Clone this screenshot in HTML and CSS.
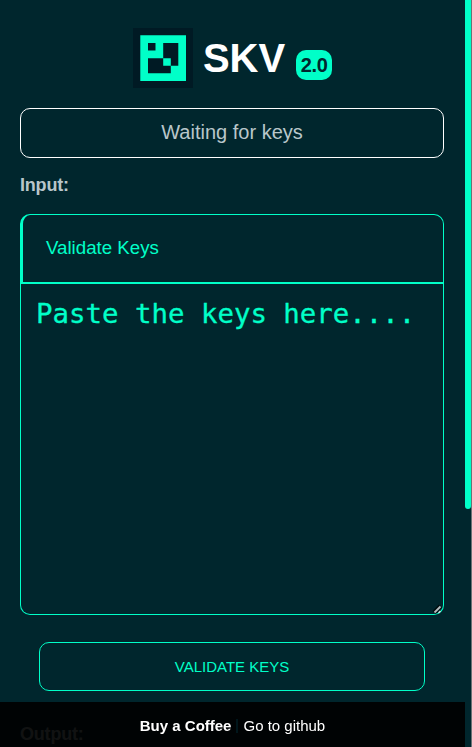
FILE: index.html
```html
<!DOCTYPE html>
<html lang="en">
<head>
<meta charset="utf-8">
<title>SKV 2.0</title>
<link rel="stylesheet" href="styles.css">
</head>
<body>
<main class="page">
  <header class="brand">
    <svg class="logo" viewBox="0 0 60 60" aria-hidden="true">
      <rect width="60" height="60" fill="#001a24"/>
      <path fill="#00ffc8" fill-rule="evenodd" d="M7.3 7.3H53V53H7.3ZM15 15V22.5H22.5V15ZM30.2 15V30.2H37.8V37.8H45.3V15ZM15 30.2V45.3H37.8V37.8H30.2V30.2Z"/>
    </svg>
    <h1 class="title">SKV</h1>
    <span class="version">2.0</span>
  </header>
  <div class="status">Waiting for keys</div>
  <h2 class="label">Input:</h2>
  <section class="editor">
    <div class="tab">Validate Keys</div>
    <textarea class="keys" placeholder="Paste the keys here...."></textarea>
    <svg class="grip" viewBox="0 0 12 12" aria-hidden="true">
      <path d="M2 9.5 8.5 3" stroke="#000d10" stroke-width="4.5"/>
      <path d="M2.5 9.5 8.5 3.5" stroke="#b5bec0" stroke-width="1.8"/>
      <path d="M6.5 10 8.5 8" stroke="#d9e6e4" stroke-width="1.5"/>
    </svg>
  </section>
  <button class="submit">VALIDATE KEYS</button>
  <h2 class="label output">Output:</h2>
</main>
<footer class="footer"><a class="coffee">Buy a Coffee</a><span class="divider"></span><a>Go to github</a></footer>
<div class="scrollbar"><div class="thumb"></div></div>
</body>
</html>
```
FILE: styles.css
```css
* { box-sizing: border-box; }
html, body { height: 100%; overflow: hidden; }
body {
  margin: 0;
  background: #00262d;
  color: #b9c6ca;
  font-family: "Liberation Sans", Arial, sans-serif;
}
.page {
  display: flex;
  flex-direction: column;
  width: 464px;
  padding: 28px 20px 0;
}
.brand { display: flex; justify-content: center; height: 60px; padding-left: 1px; }
.logo { width: 60px; height: 60px; }
.title {
  margin: 7px 0 0 10px;
  color: #fff;
  font-size: 40px;
  line-height: 46px;
}
.version {
  width: 36px;
  height: 30px;
  margin: 22px 0 0 11px;
  border-radius: 10px;
  background: #00ffc8;
  color: #00262d;
  font-size: 20px;
  font-weight: bold;
  letter-spacing: -0.4px;
  line-height: 30px;
  text-align: center;
}
.status {
  height: 50px;
  margin-top: 20px;
  border: 1px solid #fff;
  border-radius: 10px;
  font-size: 20px;
  line-height: 47px;
  text-align: center;
}
.label { margin: 17px 0 0; font-size: 18px; letter-spacing: -0.2px; line-height: 20px; }
.editor { position: relative; margin-top: 19px; }
.tab {
  height: 70px;
  padding-left: 23px;
  border: 1px solid #00ffc8;
  border-width: 1px 1px 2px 3px;
  border-radius: 10px 10px 0 0;
  color: #00ffc8;
  font-size: 18.7px;
  line-height: 65px;
}
.keys {
  display: block;
  width: 100%;
  height: 331px;
  padding: 10px 15px;
  border: 1px solid #00ffc8;
  border-top: 0;
  border-radius: 0 0 10px 10px;
  outline: 0;
  resize: none;
  background: transparent;
  color: #00ffc8;
  font: 27.4px/40px "DejaVu Sans Mono", monospace;
}
.keys::placeholder { color: #00ffc8; -webkit-text-stroke: 0.3px #00ffc8; }
.grip { position: absolute; right: 0; bottom: 0; width: 12px; height: 12px; }
.submit {
  width: 386px;
  height: 49px;
  margin: 27px 0 0 19px;
  padding: 0;
  border: 1px solid #00ffc8;
  border-radius: 10px;
  background: transparent;
  color: #00ffc8;
  font: 15px "Liberation Sans", Arial, sans-serif;
}
.output { margin-top: 33px; }
.footer {
  position: fixed;
  bottom: 0;
  left: 0;
  display: flex;
  align-items: center;
  justify-content: center;
  width: 465px;
  height: 45px;
  padding-top: 2px;
  background: rgba(0, 0, 0, 0.91);
  color: #fff;
  font-size: 15px;
}
.coffee { font-weight: bold; }
.divider { width: 2px; height: 14px; margin: 0 5px; background: #00161b; }
.scrollbar {
  position: fixed;
  top: 0;
  right: 0;
  width: 7px;
  height: 100%;
  border-right: 1px solid #6b7375;
}
.thumb { height: 509px; border-radius: 0 0 3px 3px; background: #00ffc8; }
```
